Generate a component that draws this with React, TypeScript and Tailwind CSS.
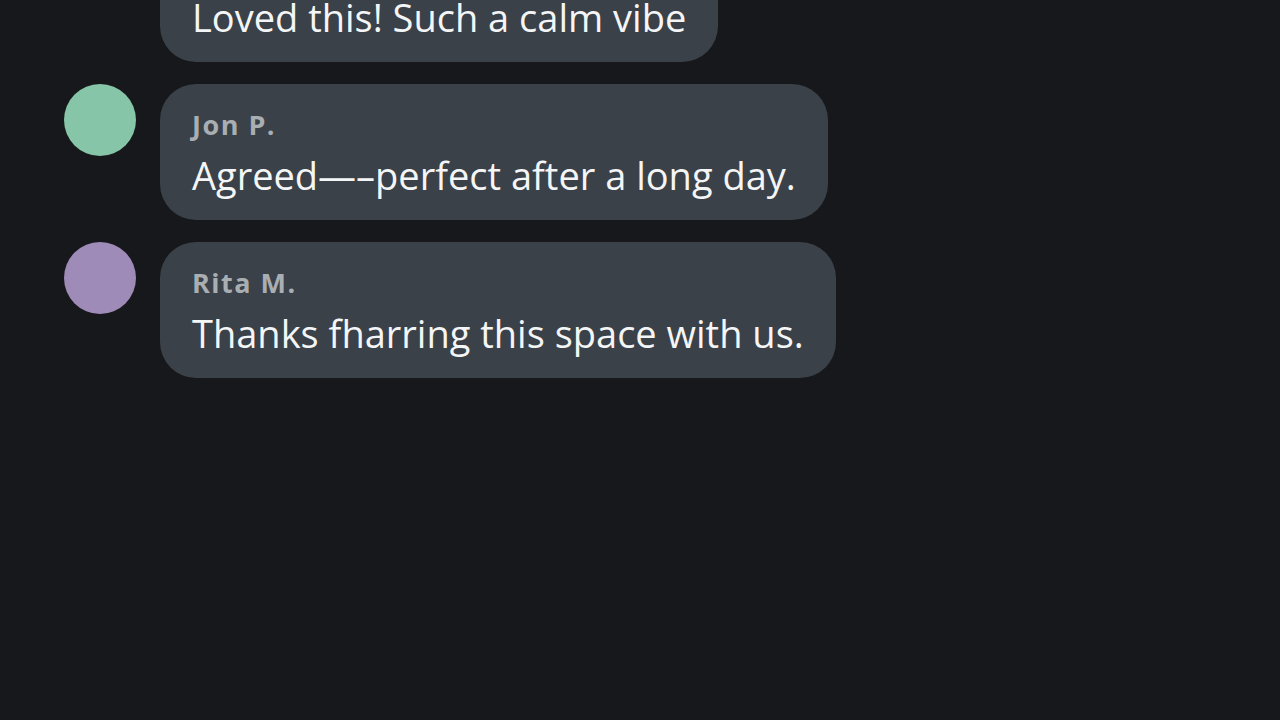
import React from "react";

type Msg = {
  name?: string;
  text: string;
  avatar?: string;
};

const messages: Msg[] = [
  { name: "Jon P.", text: "Agreed—–perfect after a long day.", avatar: "bg-[#86c5a7]" },
  { name: "Rita M.", text: "Thanks fharring this space with us.", avatar: "bg-[#9f8bb8]" },
];

const Bubble: React.FC<{ name?: string; text: string }> = ({ name, text }) => (
  <div className="rounded-[36px] bg-[#3a4148] pl-8 pr-8 pt-[25px] pb-[23px]">
    {name && (
      <div className="text-[27px] font-bold leading-[32px] tracking-[1.5px] text-[#a9aeb3]">
        {name}
      </div>
    )}
    <div className="mt-[12px] whitespace-nowrap text-[38px] leading-[44px] text-[#f4f5f6]">
      {text}
    </div>
  </div>
);

export default function App() {
  return (
    <div
      className="h-[720px] w-[1280px] overflow-hidden bg-[#17181b]"
      style={{ fontFamily: '"Open Sans", "Noto Sans", sans-serif' }}
    >
      <div className="flex flex-col items-start gap-[22px] pl-16">
        {/* last message from the earlier sender, scrolled mostly out of view */}
        <div className="ml-[96px] -mt-[74px]">
          <Bubble name="Mia L." text="Loved this! Such a calm vibe" />
        </div>

        {messages.map((m) => (
          <div key={m.name} className="flex items-start gap-6">
            <div className={`h-[72px] w-[72px] shrink-0 rounded-full ${m.avatar}`} />
            <Bubble name={m.name} text={m.text} />
          </div>
        ))}
      </div>
    </div>
  );
}
